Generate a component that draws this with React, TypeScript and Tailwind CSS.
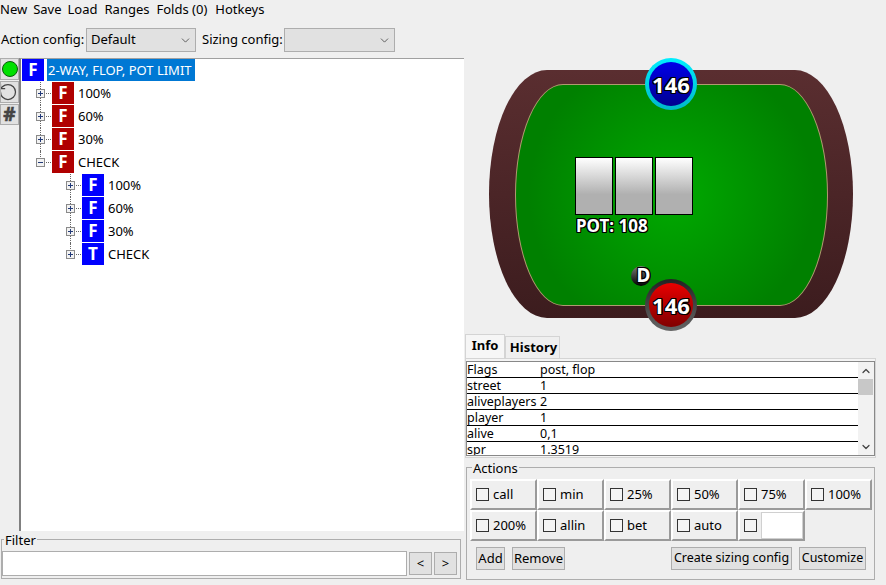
import { ChevronDown, ChevronUp, RotateCcw } from "lucide-react"

const outline = "[text-shadow:1px_0_0_#000,-1px_0_0_#000,0_1px_0_#000,0_-1px_0_#000,1px_1px_0_#000,-1px_-1px_0_#000,1px_-1px_0_#000,-1px_1px_0_#000]"

function Expander({ open, lastChild }: { open?: boolean; lastChild?: boolean }) {
  return (
    <div className="relative w-[16px] h-[23px] shrink-0">
      <div className={`absolute left-[4px] top-0 border-l border-dotted border-[#666] ${lastChild ? "h-[12px]" : "h-[23px]"}`} />
      <div className="absolute left-[5px] top-[11px] w-[10px] border-t border-dotted border-[#666]" />
      <div className="absolute left-0 top-[7px] w-[9px] h-[9px] bg-[#f2f2f2] border border-[#8a8a8a] flex items-center justify-center">
        <div className="relative w-[5px] h-px bg-[#223a78]">
          {!open && <div className="absolute left-[2px] top-[-2px] w-px h-[5px] bg-[#223a78]" />}
        </div>
      </div>
    </div>
  )
}

function NodeIcon({ letter, red }: { letter: string; red?: boolean }) {
  return (
    <div className={`w-[22px] h-[22px] shrink-0 flex items-center justify-center pb-[2px] text-white font-bold text-[17px] leading-none ${red ? "bg-[#b00000]" : "bg-[#0000ff]"}`}>
      {letter}
    </div>
  )
}

function TreeRow({ indent, letter, label, red, open, lastChild }: { indent: string; letter: string; label: string; red?: boolean; open?: boolean; lastChild?: boolean }) {
  return (
    <div className={`flex items-start h-[23px] ${indent}`}>
      <Expander open={open} lastChild={lastChild} />
      <NodeIcon letter={letter} red={red} />
      <span className="ml-[4px] leading-[22px]">{label}</span>
    </div>
  )
}

function Combo({ label, className }: { label: string; className: string }) {
  return (
    <div className={`h-[24px] bg-[#e1e1e1] border border-[#adadad] flex items-center justify-between pl-[4px] pr-[3px] ${className}`}>
      <span>{label}</span>
      <ChevronDown size={13} strokeWidth={1.5} className="text-[#444]" />
    </div>
  )
}

function Btn({ label, className }: { label: string; className: string }) {
  return (
    <div className={`bg-[#e1e1e1] border border-[#adadad] flex items-center justify-center whitespace-nowrap ${className}`}>{label}</div>
  )
}

function ActionCell({ label }: { label: string }) {
  return (
    <div className="w-[67px] h-[31px] border-2 border-t-white border-l-white border-r-[#9a9a9a] border-b-[#9a9a9a] flex items-center pl-[4px]">
      <div className="w-[13px] h-[13px] bg-[#f4f4f4] border border-[#333] shrink-0" />
      <span className="ml-[4px]">{label}</span>
    </div>
  )
}

const infoRows = [
  ["Flags", "post, flop"],
  ["street", "1"],
  ["aliveplayers", "2"],
  ["player", "1"],
  ["alive", "0,1"],
  ["spr", "1.3519"],
]

export default function App() {
  return (
    <div className="w-[886px] h-[585px] overflow-hidden bg-[#efefef] text-[13px] text-black font-['Noto_Sans',sans-serif] flex flex-col">
      <div className="h-[19px] flex items-center gap-[6px] leading-none">
        <span>New</span>
        <span>Save</span>
        <span>Load</span>
        <span className="ml-[1px]">Ranges</span>
        <span className="ml-[1px]">Folds (0)</span>
        <span className="ml-[2px]">Hotkeys</span>
      </div>

      <div className="mt-[9px] h-[24px] flex items-center pl-[1px]">
        <span className="w-[85px]">Action config:</span>
        <Combo label="Default" className="w-[110px]" />
        <span className="ml-[6px] w-[82px]">Sizing config:</span>
        <Combo label="" className="w-[111px]" />
      </div>

      <div className="mt-[6px] flex flex-1 min-h-0">
        {/* Left side */}
        <div className="w-[465px] flex flex-col shrink-0">
          <div className="h-[473px] flex">
            <div className="w-[19px] flex flex-col gap-[1px] items-start">
              <div className="w-[19px] h-[22px] bg-[#e1e1e1] border border-[#adadad] flex items-center justify-center">
                <div className="w-[16px] h-[16px] rounded-full bg-[#00e000] border border-[#0a5a0a] shrink-0" />
              </div>
              <div className="w-[19px] h-[22px] bg-[#e1e1e1] border border-[#adadad] flex items-center overflow-hidden">
                <RotateCcw size={20} strokeWidth={1.5} className="text-[#444] shrink-0 ml-[-3px]" />
              </div>
              <div className="w-[19px] h-[21px] bg-[#e1e1e1] border border-[#adadad] flex items-center justify-center font-bold text-[19px] text-[#444] leading-none [-webkit-text-stroke:0.6px_#444]">#</div>
            </div>
            <div className="w-[445px] bg-white border-l-2 border-t border-l-[#808080] border-t-[#a0a0a0]">
              <div className="flex items-start h-[23px] pl-px">
                <NodeIcon letter="F" />
                <span className="ml-[3px] pl-px w-[148px] h-[22px] leading-[22px] bg-[#0078d4] text-white whitespace-nowrap">2-WAY, FLOP, POT LIMIT</span>
              </div>
              <TreeRow indent="pl-[15px]" letter="F" label="100%" red />
              <TreeRow indent="pl-[15px]" letter="F" label="60%" red />
              <TreeRow indent="pl-[15px]" letter="F" label="30%" red />
              <TreeRow indent="pl-[15px]" letter="F" label="CHECK" red open lastChild />
              <TreeRow indent="pl-[45px]" letter="F" label="100%" />
              <TreeRow indent="pl-[45px]" letter="F" label="60%" />
              <TreeRow indent="pl-[45px]" letter="F" label="30%" />
              <TreeRow indent="pl-[45px]" letter="T" label="CHECK" lastChild />
            </div>
          </div>

          <div className="relative mt-[8px] ml-[1px] w-[460px] h-[40px] border border-[#adadad] flex items-start gap-[1px] pt-[11px]">
            <span className="absolute left-[2px] top-[-8px] bg-[#efefef] px-[1px] leading-[16px]">Filter</span>
            <div className="w-[405px] h-[25px] bg-white border border-[#adadad]" />
            <Btn label="<" className="w-[23px] h-[23px] mt-px ml-[1px]" />
            <Btn label=">" className="w-[23px] h-[23px] mt-px ml-[1px]" />
          </div>
        </div>

        {/* Right side */}
        <div className="flex-1 flex flex-col min-w-0">
          <div className="h-[276px] relative">
            <div className="absolute left-[24px] top-[12px] w-[364px] h-[248px] rounded-[58px/124px] bg-[linear-gradient(#5a2e30,#3c1c1e)] flex items-start justify-center pt-[14px]">
              <div className="w-[313px] h-[222px] rounded-[48px/111px] border border-[#b09a70] bg-[radial-gradient(circle_at_center,#00aa00,#008000_75%)]" />
            </div>

            <div className="absolute left-[110px] top-[99px] flex gap-[2px]">
              <div className="w-[38px] h-[58px] border border-black bg-[linear-gradient(#ffffff,#b0b0b0_65%)]" />
              <div className="w-[38px] h-[58px] border border-black bg-[linear-gradient(#ffffff,#b0b0b0_65%)]" />
              <div className="w-[38px] h-[58px] border border-black bg-[linear-gradient(#ffffff,#b0b0b0_65%)]" />
            </div>
            <span className={`absolute left-[111px] top-[157px] text-white font-bold text-[17px] leading-[22px] whitespace-nowrap ${outline}`}>POT: 108</span>

            <div className="absolute left-[180px] top-0 w-[52px] h-[52px] rounded-full p-[4px] bg-[linear-gradient(#00eeff,#00b8c8)]">
              <div className="w-[44px] h-[44px] rounded-full bg-[linear-gradient(#0000e8,#000090)] flex items-center justify-center">
                <span className={`text-white font-bold text-[22px] leading-none ${outline}`}>146</span>
              </div>
            </div>

            <div className="absolute left-[166px] top-[208px] w-[20px] h-[20px] rounded-full bg-[linear-gradient(#777,#000)] flex items-center justify-center pl-[5px] pb-[1px]">
              <span className={`text-white font-bold text-[19px] leading-none ${outline}`}>D</span>
            </div>

            <div className="absolute left-[180px] top-[221px] w-[52px] h-[52px] rounded-full p-[4px] bg-[linear-gradient(#222,#666)]">
              <div className="w-[44px] h-[44px] rounded-full bg-[linear-gradient(#e80000,#800000)] flex items-center justify-center">
                <span className={`text-white font-bold text-[22px] leading-none ${outline}`}>146</span>
              </div>
            </div>
          </div>

          <div className="flex h-[24px] items-end font-bold">
            <div className="w-[40px] h-[24px] bg-[#f6f6f6] border border-b-0 border-[#d4d4d4] flex items-center justify-center pb-[2px]">Info</div>
            <div className="w-[55px] h-[22px] border border-b-0 border-[#d4d4d4] flex items-center justify-center pl-[2px]">History</div>
          </div>

          <div className="w-[411px] h-[100px] border border-[#d4d4d4] bg-[#f4f4f4] pt-[2px]">
            <div className="w-[409px] h-[95px] border border-[#888] bg-white flex overflow-hidden">
              <div className="w-[391px] shrink-0 text-[12.5px]">
                {infoRows.map(([name, value]) => (
                  <div key={name} className="h-[16px] flex border-b border-black leading-[15px]">
                    <span className="w-[73px] shrink-0">{name}</span>
                    <span>{value}</span>
                  </div>
                ))}
              </div>
              <div className="flex-1 bg-[#f2f2f2] flex flex-col items-center justify-between relative">
                <ChevronUp size={12} strokeWidth={2.5} className="mt-[3px] text-[#444]" />
                <div className="absolute top-[17px] left-0 w-[15px] h-[16px] bg-[#c8c8c8]" />
                <ChevronDown size={12} strokeWidth={2.5} className="mb-[2px] text-[#444]" />
              </div>
            </div>
          </div>

          <div className="relative mt-[9px] ml-px w-[409px] h-[113px] border border-[#adadad] pt-[11px] pl-[3px]">
            <span className="absolute left-[5px] top-[-8px] bg-[#efefef] px-px leading-[16px]">Actions</span>
            <div className="flex">
              <ActionCell label="call" />
              <ActionCell label="min" />
              <ActionCell label="25%" />
              <ActionCell label="50%" />
              <ActionCell label="75%" />
              <ActionCell label="100%" />
            </div>
            <div className="flex">
              <ActionCell label="200%" />
              <ActionCell label="allin" />
              <ActionCell label="bet" />
              <ActionCell label="auto" />
              <div className="w-[67px] h-[31px] border-2 border-t-white border-l-white border-r-[#9a9a9a] border-b-[#9a9a9a] flex items-center pl-[4px]">
                <div className="w-[13px] h-[13px] bg-[#f4f4f4] border border-[#333] shrink-0" />
                <div className="ml-[4px] w-[42px] h-[27px] bg-white border border-[#d0d0d0]" />
              </div>
            </div>
            <div className="flex mt-[6px] pl-[6px]">
              <Btn label="Add" className="w-[29px] h-[23px]" />
              <Btn label="Remove" className="ml-[7px] w-[53px] h-[23px]" />
              <Btn label="Create sizing config" className="ml-[106px] w-[121px] h-[23px] text-[12.5px]" />
              <Btn label="Customize" className="ml-[7px] w-[67px] h-[23px] text-[12.5px]" />
            </div>
          </div>
        </div>
      </div>
    </div>
  )
}
